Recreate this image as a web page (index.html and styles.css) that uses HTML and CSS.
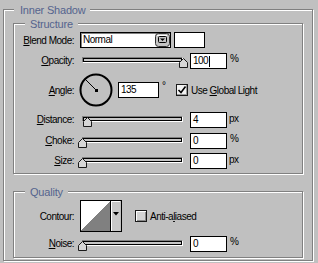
FILE: index.html
```html
<!DOCTYPE html>
<html>
<head>
<meta charset="utf-8">
<link rel="stylesheet" href="styles.css">
</head>
<body>
<div class="group outer">
  <div class="legend legend-outer">Inner Shadow</div>

  <div class="group inner structure">
    <div class="legend">Structure</div>

    <div class="row row-blend">
      <span class="lbl"><u>B</u>lend Mode:</span>
      <div class="select">
        <span class="select-text">Normal</span>
        <svg class="popup-btn" width="15" height="14" viewBox="0 0 15 14">
          <rect x="0.5" y="0.5" width="14" height="13" rx="3" fill="#c4c4c4" stroke="#303030"/>
          <path d="M2 2.5 H12" stroke="#fff" stroke-width="1"/>
          <rect x="3.5" y="3.5" width="8" height="6" rx="1" fill="none" stroke="#000"/>
          <path d="M5 5.5 H10 L7.5 8 Z" fill="#000"/>
        </svg>
      </div>
      <div class="swatch"></div>
    </div>

    <div class="row row-slider row-opacity">
      <span class="lbl"><u>O</u>pacity:</span>
      <div class="track">
        <svg class="thumb" style="left:96px" width="9" height="10" viewBox="0 0 9 10"><polygon points="0.5,9.5 0.5,4.5 4.5,0.5 8.5,4.5 8.5,9.5" fill="#d6d6d6" stroke="#1a1a1a"/></svg>
      </div>
      <div class="field">100<span class="caret"></span></div>
      <span class="unit">%</span>
    </div>

    <div class="row row-angle">
      <span class="lbl"><u>A</u>ngle:</span>
      <svg class="dial" width="34" height="34" viewBox="0 0 34 34">
        <circle cx="17" cy="17" r="15.5" fill="none" stroke="#000" stroke-width="2"/>
        <line x1="17" y1="17" x2="6" y2="6" stroke="#000" stroke-width="1"/>
        <rect x="16" y="16" width="3" height="3" fill="#000"/>
      </svg>
      <div class="field field-angle">135</div>
      <span class="deg">°</span>
      <span class="check checked">
        <svg width="10" height="10" viewBox="0 0 10 10"><path d="M1.5 5 L4 7.5 L8.5 1.5" fill="none" stroke="#000" stroke-width="1.6"/></svg>
      </span>
      <span class="check-text">Use <u>G</u>lobal Light</span>
    </div>

    <div class="row row-slider row-distance">
      <span class="lbl"><u>D</u>istance:</span>
      <div class="track">
        <svg class="thumb" style="left:0px" width="9" height="10" viewBox="0 0 9 10"><polygon points="0.5,9.5 0.5,4.5 4.5,0.5 8.5,4.5 8.5,9.5" fill="#d6d6d6" stroke="#1a1a1a"/></svg>
      </div>
      <div class="field">4</div>
      <span class="unit unit-px">px</span>
    </div>

    <div class="row row-slider row-choke">
      <span class="lbl"><u>C</u>hoke:</span>
      <div class="track">
        <svg class="thumb" style="left:-5px" width="9" height="10" viewBox="0 0 9 10"><polygon points="0.5,9.5 0.5,4.5 4.5,0.5 8.5,4.5 8.5,9.5" fill="#d6d6d6" stroke="#1a1a1a"/></svg>
      </div>
      <div class="field">0</div>
      <span class="unit">%</span>
    </div>

    <div class="row row-slider row-size">
      <span class="lbl"><u>S</u>ize:</span>
      <div class="track">
        <svg class="thumb" style="left:-5px" width="9" height="10" viewBox="0 0 9 10"><polygon points="0.5,9.5 0.5,4.5 4.5,0.5 8.5,4.5 8.5,9.5" fill="#d6d6d6" stroke="#1a1a1a"/></svg>
      </div>
      <div class="field">0</div>
      <span class="unit unit-px">px</span>
    </div>
  </div>

  <div class="group inner quality">
    <div class="legend">Quality</div>

    <div class="row row-contour">
      <span class="lbl">Contour:</span>
      <div class="picker">
        <svg class="preview" width="29" height="30" viewBox="0 0 29 30" shape-rendering="crispEdges">
          <rect width="29" height="30" fill="#fff"/>
          <polygon points="0,30 29,0 29,30" fill="#808080"/>
        </svg>
        <div class="picker-btn">
          <svg width="6" height="4" viewBox="0 0 6 4"><path d="M0 0 H6 L3 3.5 Z" fill="#000"/></svg>
        </div>
      </div>
      <span class="check check-aa"></span>
      <span class="check-text">Anti-a<u>l</u>iased</span>
    </div>

    <div class="row row-slider row-noise">
      <span class="lbl"><u>N</u>oise:</span>
      <div class="track">
        <svg class="thumb" style="left:-5px" width="9" height="10" viewBox="0 0 9 10"><polygon points="0.5,9.5 0.5,4.5 4.5,0.5 8.5,4.5 8.5,9.5" fill="#d6d6d6" stroke="#1a1a1a"/></svg>
      </div>
      <div class="field">0</div>
      <span class="unit">%</span>
    </div>
  </div>
</div>
</body>
</html>
```

FILE: styles.css
```css
* {
  box-sizing: border-box;
}

html, body {
  margin: 0;
  padding: 0;
}

body {
  background: #c0c0c0;
  width: 318px;
  height: 263px;
  overflow: hidden;
  font-family: "Liberation Sans", Arial, sans-serif;
  font-size: 10px;
  letter-spacing: -0.5px;
  color: #000;
}

u {
  text-decoration: underline;
  text-underline-offset: 1px;
}

.group {
  border: 1px solid #808080;
  box-shadow: inset 1px 1px 0 #fff, 1px 1px 0 #fff;
}

.outer {
  margin: 9px 0 0 3px;
  width: 310px;
  padding-bottom: 2px;
}

.inner {
  margin-left: 9px;
  margin-right: 9px;
}

.structure {
  margin-top: 6px;
  padding-bottom: 4px;
}

.quality {
  margin-top: 17px;
  padding-bottom: 5px;
}

.legend {
  width: fit-content;
  background: #c0c0c0;
  font-size: 11px;
  line-height: 14px;
  height: 14px;
  margin-top: -7px;
  color: #55648e;
  letter-spacing: -0.2px;
}

.legend-outer {
  margin-left: 10px;
  padding: 0 5px 0 6px;
}

.inner .legend {
  margin-left: 11px;
  padding: 0 5px;
}

.row {
  display: flex;
  align-items: center;
}

.lbl {
  flex: none;
  width: 60px;
  text-align: right;
  white-space: nowrap;
}

/* Blend mode row */
.row-blend {
  margin-top: 1px;
}

.select {
  flex: none;
  margin-left: 6px;
  width: 91px;
  height: 16px;
  border: 1px solid #000;
  box-shadow: inset 1px 1px 0 #808080;
  background: #fff;
  display: flex;
  align-items: center;
  justify-content: space-between;
  padding-left: 2px;
}

.select-text {
  line-height: 14px;
}

.popup-btn {
  display: block;
  flex: none;
}

.swatch {
  flex: none;
  margin-left: 3px;
  width: 31px;
  height: 16px;
  border: 1px solid #000;
  background: #fff;
}

/* Sliders */
.row-slider {
  height: 16px;
  align-items: flex-start;
}

.row-slider .lbl {
  line-height: 16px;
}

.row-opacity {
  margin-top: 5px;
}

.row-distance {
  margin-top: 5px;
}

.row-choke {
  margin-top: 5px;
}

.row-size {
  margin-top: 4px;
}

.row-noise {
  margin-top: 4px;
}

.track {
  position: relative;
  flex: none;
  margin-left: 8px;
  margin-top: 4px;
  width: 101px;
  height: 6px;
  border: 1px solid;
  border-color: #808080 #fff #fff #808080;
  background: #c6c6c6;
  box-shadow: inset 1px 1px 0 #000, inset -1px -1px 0 #000;
}

.thumb {
  position: absolute;
  top: 0;
  display: block;
}

.field {
  flex: none;
  margin-left: 7px;
  width: 37px;
  height: 16px;
  border: 1px solid #000;
  background: #fff;
  padding-left: 2px;
  line-height: 14px;
  display: flex;
  align-items: center;
}

.caret {
  display: inline-block;
  width: 1px;
  height: 11px;
  background: #000;
  margin-left: 1px;
}

.unit {
  margin-left: 3px;
  line-height: 12px;
}

.unit-px {
  margin-left: 2px;
  line-height: 14px;
}

/* Angle */
.row-angle {
  margin-top: 4px;
  height: 34px;
}

.dial {
  display: block;
  flex: none;
  margin-left: 5px;
}

.field-angle {
  margin-left: 5px;
  width: 41px;
}

.deg {
  flex: none;
  width: 14px;
  margin-left: 3px;
  align-self: flex-start;
  margin-top: 8px;
  line-height: 10px;
}

.check {
  flex: none;
  width: 12px;
  height: 12px;
  border: 1px solid #1a1a1a;
  background: #f2f2f2;
  box-shadow: inset -1px -1px 0 #9a9a9a;
  display: flex;
  align-items: center;
  justify-content: center;
}

.check svg {
  display: block;
}

.check-text {
  margin-left: 3px;
  white-space: nowrap;
}

/* Contour */
.row-contour {
  margin-top: 1px;
}

.picker {
  flex: none;
  margin-left: 6px;
  width: 42px;
  height: 32px;
  border: 1px solid #000;
  display: flex;
  background: #c0c0c0;
}

.preview {
  display: block;
  flex: none;
}

.picker-btn {
  flex: none;
  width: 10px;
  border-left: 1px solid #000;
  display: flex;
  justify-content: center;
  padding-top: 11px;
  background: #c8c8c8;
  box-shadow: inset 1px 1px 0 #fff;
}

.picker-btn svg {
  display: block;
}

.check-aa {
  margin-left: 13px;
  background: #d4d4d4;
  box-shadow: inset 1px 1px 0 #fff, inset -1px -1px 0 #8a8a8a;
}
```
